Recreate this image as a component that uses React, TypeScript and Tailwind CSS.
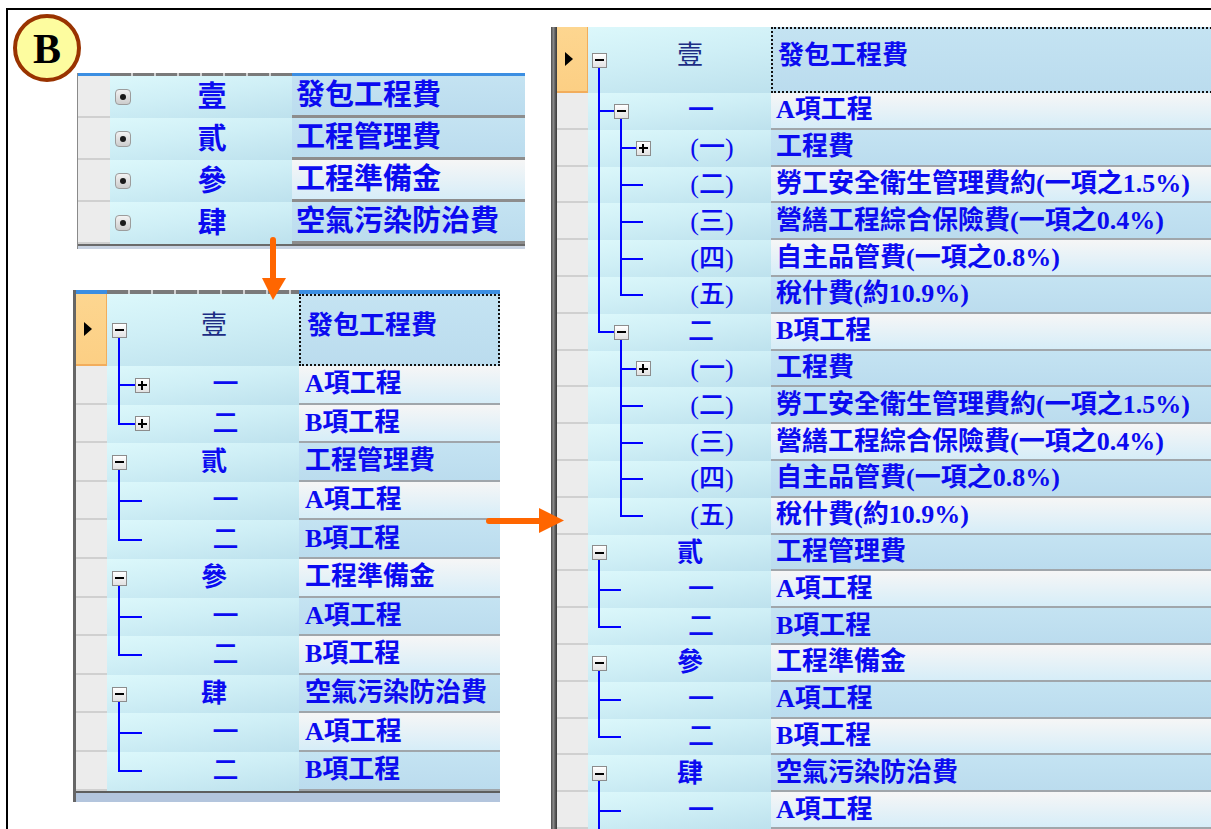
import React from 'react';

type BoxT = '+' | '-' | 'dot' | undefined;
type Row = { n: string; t: string; l: number; b?: BoxT; c: 'b' | 'w'; s?: boolean };

type G = {
  lb: string;
  sel: string;
  num: string;
  text: string;
  h0: string;
  h: string;
  fs: string;
  strip: string | null;
  sep: string;
  pl: string;
  x0: number;
  step: number;
  gap: number;
  box: number;
  bottom: 'tl' | 'bl' | null;
};

function continues(rows: Row[], i: number, lvl: number) {
  for (let j = i + 1; j < rows.length; j++) {
    if (rows[j].l < lvl) return false;
    if (rows[j].l === lvl) return true;
  }
  return false;
}

function TreeBox({ type }: { type: BoxT }) {
  if (type === 'dot')
    return (
      <div className="w-[16px] h-[16px] rounded-[4px] border border-[#9c9c9c] bg-gradient-to-b from-[#f3f3f3] to-[#cdcdcd] flex items-center justify-center">
        <div className="w-[6px] h-[6px] rounded-full bg-[#1a1a1a] blur-[0.6px]" />
      </div>
    );
  return (
    <div className="relative w-[15px] h-[15px] border border-[#8c8c8c] bg-gradient-to-b from-white to-[#e2e2e2] flex items-center justify-center">
      <div className="absolute w-[9px] h-[2px] bg-black" />
      {type === '+' && <div className="absolute w-[2px] h-[9px] bg-black" />}
    </div>
  );
}

function NumCell({ rows, i, g }: { rows: Row[]; i: number; g: G }) {
  const r = rows[i];
  const L = r.l;
  const cx = (l: number) => g.x0 + g.step * l;
  const half = g.box / 2;
  const els: React.ReactNode[] = [];
  for (let c = 0; c < L; c++) {
    const cont = continues(rows, i, c + 1);
    if (c === L - 1) {
      els.push(
        <div
          key={'v' + c}
          className="absolute top-0 w-[2px] bg-[#0000ff]"
          style={{ left: cx(c) - 1, height: cont ? '100%' : 'calc(50% + 1px)' }}
        />
      );
      const end = r.b ? cx(L) - half : cx(L);
      els.push(
        <div
          key="h"
          className="absolute top-1/2 -mt-[1px] h-[2px] bg-[#0000ff]"
          style={{ left: cx(c) - 1, width: end - cx(c) + 1 }}
        />
      );
    } else if (cont) {
      els.push(
        <div key={'v' + c} className="absolute top-0 bottom-0 w-[2px] bg-[#0000ff]" style={{ left: cx(c) - 1 }} />
      );
    }
  }
  if (r.b === '-')
    els.push(
      <div
        key="down"
        className="absolute bottom-0 w-[2px] bg-[#0000ff]"
        style={{ left: cx(L) - 1, top: `calc(50% + ${half}px)` }}
      />
    );
  if (r.b)
    els.push(
      <div key="box" className="absolute top-1/2" style={{ left: cx(L) - half, marginTop: -half }}>
        <TreeBox type={r.b} />
      </div>
    );
  return (
    <div
      className={`relative h-full shrink-0 flex items-center ${g.num} bg-[linear-gradient(172deg,#dcf8fb_0%,#cfeff6_45%,#bde1ed_100%)]`}
    >
      {els}
      <div
        className={`flex-1 text-center leading-none whitespace-nowrap ${g.fs} ${
          r.s
            ? 'text-[#1c2c84] font-normal pb-[8px]'
            : L === 0
            ? 'text-[#0b0bf0] font-bold'
            : 'text-[#0b0bf0] font-medium'
        }`}
        style={{ paddingLeft: cx(L) + g.gap }}
      >
        {r.n}
      </div>
    </div>
  );
}

function Grid({ rows, g }: { rows: Row[]; g: G }) {
  return (
    <div className="flex shrink-0">
      <div className={`self-stretch shrink-0 ${g.lb}`} />
      <div className="flex flex-col">
        {g.strip && (
          <div className={`flex ${g.strip}`}>
            <div className={`${g.sel} bg-[#3b8ee2]`} />
            <div
              className={`${g.num} bg-[repeating-linear-gradient(90deg,#7a7a7a_0px,#7a7a7a_21px,#d2d2d2_21px,#d2d2d2_23px)]`}
            />
            <div className={`${g.text} bg-[#3b8ee2]`} />
          </div>
        )}
        {rows.map((r, i) => (
          <div key={i} className={`flex ${i === 0 ? g.h0 : g.h}`}>
            <div
              className={`${g.sel} h-full shrink-0 flex items-center ${
                r.s
                  ? 'bg-gradient-to-b from-[#fdd690] to-[#fccf84] border-b-2 border-r border-[#f2ad5c]'
                  : 'bg-[#ececec] border-b-2 border-[#d0d0d0]'
              }`}
            >
              {r.s && (
                <div className="ml-[8px] w-0 h-0 border-y-[7px] border-y-transparent border-l-[8px] border-l-black" />
              )}
            </div>
            <NumCell rows={rows} i={i} g={g} />
            <div
              className={`${g.text} h-full shrink-0 flex items-center whitespace-nowrap overflow-hidden font-bold leading-none text-[#0b0bf0] ${g.fs} ${g.pl} ${
                r.s ? 'border-2 border-dotted border-[#111111] pb-[8px]' : g.sep
              } ${
                r.c === 'b'
                  ? 'bg-gradient-to-b from-[#c4e3f2] to-[#bbdcee]'
                  : 'bg-gradient-to-b from-[#f6f6f6] to-[#d6edf8]'
              }`}
            >
              {r.t}
            </div>
          </div>
        ))}
        {g.bottom === 'tl' && (
          <>
            <div className="h-[2px] bg-[#6a6a6a]" />
            <div className="h-[3px] bg-[#c9d3e2]" />
          </>
        )}
        {g.bottom === 'bl' && (
          <>
            <div className="h-[2px] bg-[#5e5e5e]" />
            <div className="h-[9px] bg-[#b3c5dd]" />
          </>
        )}
      </div>
    </div>
  );
}

const topRows: Row[] = [
  { n: '壹', t: '發包工程費', l: 0, b: 'dot', c: 'b' },
  { n: '貳', t: '工程管理費', l: 0, b: 'dot', c: 'b' },
  { n: '參', t: '工程準備金', l: 0, b: 'dot', c: 'w' },
  { n: '肆', t: '空氣污染防治費', l: 0, b: 'dot', c: 'b' },
];

const blRows: Row[] = [
  { n: '壹', t: '發包工程費', l: 0, b: '-', c: 'b', s: true },
  { n: '一', t: 'A項工程', l: 1, b: '+', c: 'w' },
  { n: '二', t: 'B項工程', l: 1, b: '+', c: 'w' },
  { n: '貳', t: '工程管理費', l: 0, b: '-', c: 'b' },
  { n: '一', t: 'A項工程', l: 1, c: 'w' },
  { n: '二', t: 'B項工程', l: 1, c: 'b' },
  { n: '參', t: '工程準備金', l: 0, b: '-', c: 'w' },
  { n: '一', t: 'A項工程', l: 1, c: 'b' },
  { n: '二', t: 'B項工程', l: 1, c: 'w' },
  { n: '肆', t: '空氣污染防治費', l: 0, b: '-', c: 'b' },
  { n: '一', t: 'A項工程', l: 1, c: 'w' },
  { n: '二', t: 'B項工程', l: 1, c: 'b' },
];

const rRows: Row[] = [
  { n: '壹', t: '發包工程費', l: 0, b: '-', c: 'b', s: true },
  { n: '一', t: 'A項工程', l: 1, b: '-', c: 'w' },
  { n: '(一)', t: '工程費', l: 2, b: '+', c: 'b' },
  { n: '(二)', t: '勞工安全衛生管理費約(一項之1.5%)', l: 2, c: 'w' },
  { n: '(三)', t: '營繕工程綜合保險費(一項之0.4%)', l: 2, c: 'b' },
  { n: '(四)', t: '自主品管費(一項之0.8%)', l: 2, c: 'w' },
  { n: '(五)', t: '稅什費(約10.9%)', l: 2, c: 'b' },
  { n: '二', t: 'B項工程', l: 1, b: '-', c: 'w' },
  { n: '(一)', t: '工程費', l: 2, b: '+', c: 'b' },
  { n: '(二)', t: '勞工安全衛生管理費約(一項之1.5%)', l: 2, c: 'b' },
  { n: '(三)', t: '營繕工程綜合保險費(一項之0.4%)', l: 2, c: 'w' },
  { n: '(四)', t: '自主品管費(一項之0.8%)', l: 2, c: 'b' },
  { n: '(五)', t: '稅什費(約10.9%)', l: 2, c: 'w' },
  { n: '貳', t: '工程管理費', l: 0, b: '-', c: 'b' },
  { n: '一', t: 'A項工程', l: 1, c: 'w' },
  { n: '二', t: 'B項工程', l: 1, c: 'b' },
  { n: '參', t: '工程準備金', l: 0, b: '-', c: 'w' },
  { n: '一', t: 'A項工程', l: 1, c: 'b' },
  { n: '二', t: 'B項工程', l: 1, c: 'w' },
  { n: '肆', t: '空氣污染防治費', l: 0, b: '-', c: 'b' },
  { n: '一', t: 'A項工程', l: 1, c: 'w' },
  { n: '', t: '', l: 1, c: 'b' },
];

const gTop: G = {
  lb: 'w-[1px] bg-[#8a8a8a]',
  sel: 'w-[32px]',
  num: 'w-[182px]',
  text: 'w-[233px]',
  h0: 'h-[42px]',
  h: 'h-[42px]',
  fs: 'text-[29px]',
  strip: 'h-[3px]',
  sep: 'border-b-[3px] border-[#8d8d8d]',
  pl: 'pl-[4px]',
  x0: 13,
  step: 22,
  gap: 9,
  box: 16,
  bottom: 'tl',
};

const gBL: G = {
  lb: 'w-[3px] bg-[#666666]',
  sel: 'w-[31px]',
  num: 'w-[192px]',
  text: 'w-[201px]',
  h0: 'h-[72px]',
  h: 'h-[38.6px]',
  fs: 'text-[26px]',
  strip: 'h-[4px]',
  sep: 'border-b-2 border-[#a0a6ab]',
  pl: 'pl-[6px]',
  x0: 12,
  step: 23,
  gap: 10,
  box: 15,
  bottom: 'bl',
};

const gR: G = {
  lb: 'w-[6px] bg-[linear-gradient(90deg,#4a4a4a,#8a8a8a_40%,#5a5a5a_70%,#3a3a3a)]',
  sel: 'w-[31px]',
  num: 'w-[183px]',
  text: 'w-[460px]',
  h0: 'h-[66px]',
  h: 'h-[36.8px]',
  fs: 'text-[26px]',
  strip: null,
  sep: 'border-b-2 border-[#a0a6ab]',
  pl: 'pl-[5px]',
  x0: 11,
  step: 22,
  gap: 10,
  box: 15,
  bottom: null,
};

export default function App() {
  return (
    <div className="relative w-[1211px] h-[829px] overflow-hidden bg-white font-['Liberation_Serif','Noto_Sans_CJK_TC',serif]">
      <div className="ml-[6px] mt-[8px] h-[900px] border-l-2 border-t-2 border-black flex">
        <div className="flex flex-col shrink-0 w-[517px] pl-[69px] pt-[63px]">
          <Grid rows={topRows} g={gTop} />
          <div className="mt-[41px] ml-[-4px]">
            <Grid rows={blRows} g={gBL} />
          </div>
        </div>
        <div className="shrink-0 ml-[26px] pt-[17px]">
          <Grid rows={rRows} g={gR} />
        </div>
      </div>

      {/* B badge */}
      <div className="absolute left-[13px] top-[14px] w-[68px] h-[68px] rounded-full border-[4px] border-[#993300] bg-[#fdfc9f] flex items-center justify-center">
        <span className="font-['Liberation_Serif',serif] font-bold text-[42px] leading-none text-black mt-[1px]">B</span>
      </div>

      {/* down arrow */}
      <svg className="absolute left-[260px] top-[234px]" width="28" height="68" viewBox="0 0 28 68">
        <rect x="10" y="3" width="6" height="46" rx="3" fill="#ff6600" />
        <polygon points="2,44 26,44 13,66" fill="#ff6600" />
      </svg>

      {/* right arrow */}
      <svg className="absolute left-[484px] top-[506px]" width="84" height="30" viewBox="0 0 84 30">
        <rect x="2" y="12" width="56" height="6" rx="3" fill="#ff6600" />
        <polygon points="55,2 55,27 80,14.5" fill="#ff6600" />
      </svg>
    </div>
  );
}
